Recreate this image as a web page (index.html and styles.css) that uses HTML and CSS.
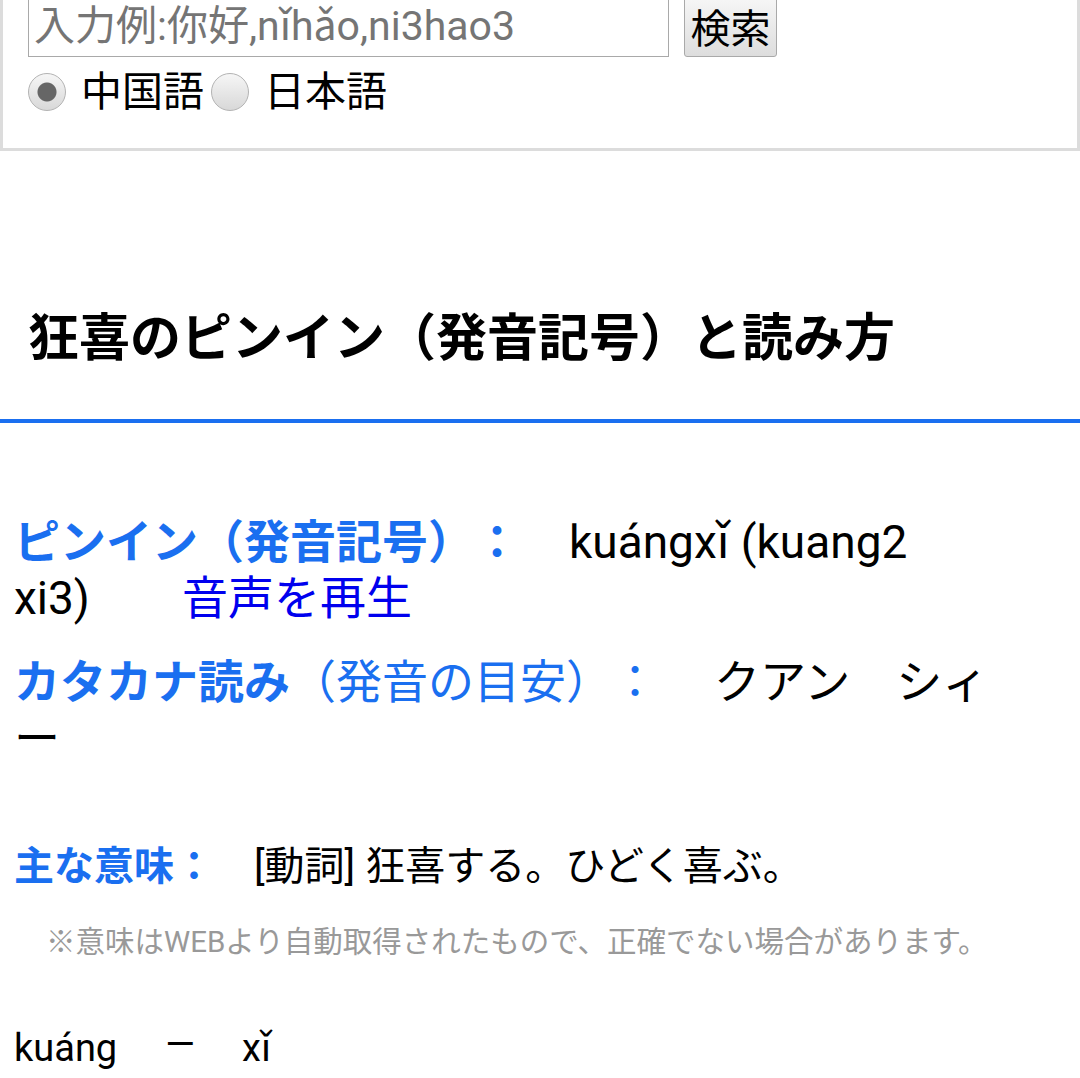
FILE: index.html
```html
<!DOCTYPE html>
<html lang="ja">
<head>
    <meta charset="UTF-8">
    <meta name="viewport" content="width=device-width, initial-scale=1.0">
    <title>狂喜のピンイン（発音記号）と読み方</title>
    <link rel="stylesheet" href="styles.css">
</head>
<body>
    <div class="search-box">
        <form class="search-form" onsubmit="return false;">
            <div class="search-row">
                <input type="text" class="search-input" placeholder="入力例:你好,nǐhǎo,ni3hao3">
                <button type="submit" class="search-button">検索</button>
            </div>
            <div class="lang-row">
                <label class="lang-option"><input type="radio" name="lang" value="zh" checked>中国語</label>
                <label class="lang-option"><input type="radio" name="lang" value="ja">日本語</label>
            </div>
        </form>
    </div>

    <h2 class="word-title">狂喜のピンイン（発音記号）と読み方</h2>

    <div class="word-detail">
        <p class="detail-row pinyin-row"><span class="label">ピンイン（発音記号）：</span><span class="pinyin-value">kuángxǐ (kuang2 xi3)</span><a class="play-link" href="#">音声を再生</a></p>
        <p class="detail-row kana-row"><span class="label">カタカナ読み</span><span class="label-sub">（発音の目安）：</span><span class="kana-value">クアン　シィー</span></p>
        <p class="detail-row meaning-row"><span class="label">主な意味：</span><span class="meaning-value">[動詞] 狂喜する。ひどく喜ぶ。</span></p>
        <p class="note">※意味はWEBより自動取得されたもので、正確でない場合があります。</p>
        <p class="syllables">kuáng<span class="syllable-sep">—</span>xǐ</p>
    </div>
</body>
</html>
```

FILE: styles.css
```css
body {
    margin: 0;
    font-family: Roboto, "Noto Sans CJK JP", sans-serif;
    color: #000;
    background-color: #fff;
    text-spacing-trim: space-all;
}
.search-box {
    margin-top: -8px;
    border: 3px solid #dcdcdc;
    padding: 0 0 36px 25px;
}
.search-row {
    display: flex;
}
.search-input {
    box-sizing: border-box;
    width: 641px;
    height: 62px;
    margin: 0;
    padding: 0 5px;
    border: 1px solid #a9a9a9;
    font-family: inherit;
    font-size: 41px;
    color: #000;
}
.search-input::placeholder {
    color: #757575;
}
.search-button {
    box-sizing: border-box;
    width: 93px;
    height: 62px;
    margin: 0 0 0 15px;
    padding: 0;
    border: 1px solid #a9a9a9;
    border-radius: 3px;
    background: linear-gradient(#f7f7f7, #dddddd);
    font-family: inherit;
    font-size: 40px;
    color: #000;
}
.lang-row {
    display: flex;
    align-items: center;
    height: 40px;
    margin-top: 15px;
}
.lang-option {
    display: flex;
    align-items: center;
    font-size: 41px;
    line-height: 40px;
}
.lang-option + .lang-option {
    margin-left: 7px;
}
.lang-option input {
    appearance: none;
    -webkit-appearance: none;
    box-sizing: border-box;
    width: 38px;
    height: 38px;
    margin: 0 15px 0 0;
    border: 1px solid #b3b3b3;
    border-radius: 50%;
    background: linear-gradient(#f6f6f6, #d8d8d8);
}
.lang-option input:checked {
    background: radial-gradient(circle, #666 0 9px, transparent 10px), linear-gradient(#f6f6f6, #d8d8d8);
}
.word-title {
    margin: 152px 0 0;
    padding: 0 0 45px 28px;
    border-bottom: 4px solid #1a6ff0;
    font-size: 51px;
    line-height: 71px;
    font-weight: bold;
}
.word-detail {
    padding: 0 87px 0 14px;
}
.detail-row {
    margin: 0;
    font-size: 46px;
    line-height: 56px;
}
.pinyin-row {
    margin-top: 91px;
}
.kana-row {
    margin-top: 28px;
}
.meaning-row {
    margin-top: 73px;
    font-size: 40px;
}
.label {
    color: #1a6ff0;
    font-weight: bold;
}
.label-sub {
    color: #1a6ff0;
}
.pinyin-value {
    margin-left: 49px;
}
.play-link {
    margin-left: 92px;
    color: #0000ee;
    text-decoration: none;
}
.kana-value {
    margin-left: 56px;
}
.meaning-value {
    margin-left: 40px;
}
.note {
    margin: 27px 0 0;
    padding-left: 32px;
    font-size: 29.5px;
    line-height: 40px;
    color: #999;
}
.syllables {
    margin: 54px 0 0;
    font-size: 38px;
    line-height: 56px;
}
.syllable-sep {
    margin: 0 47px 0 48px;
    vertical-align: 4px;
}
```
